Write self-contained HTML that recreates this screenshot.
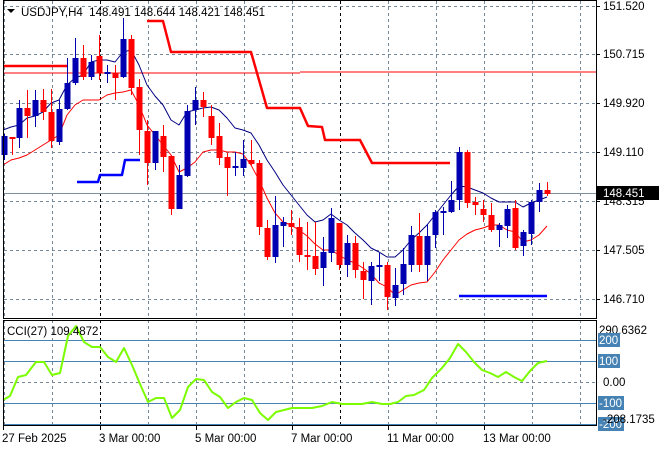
<!DOCTYPE html>
<html><head><meta charset="utf-8"><style>
body{margin:0;background:#fff;width:660px;height:450px;overflow:hidden}
svg{display:block}
text{font-family:"Liberation Sans","DejaVu Sans",sans-serif;font-size:11.5px;fill:#000}
</style></head><body>
<svg id="s" width="660" height="450" xmlns="http://www.w3.org/2000/svg"></svg>
<script>
var s=document.getElementById('s'),h='';
function L(x1,y1,x2,y2,c,w,d){h+='<line x1="'+x1+'" y1="'+y1+'" x2="'+x2+'" y2="'+y2+'" stroke="'+c+'" stroke-width="'+(w||1)+'"'+(d?' stroke-dasharray="'+d+'"':'')+'/>';}
function P(pts,c,w){h+='<polyline fill="none" stroke="'+c+'" stroke-width="'+w+'" stroke-linejoin="round" points="'+pts.map(function(p){return p.join(',')}).join(' ')+'"/>';}
function T(x,y,t,a){h+='<text x="'+x+'" y="'+y+'"'+(a?' '+a:'')+'>'+t+'</text>';}
// grid main
var gy=[6,54,103,152,201,250,299];
gy.forEach(function(y){L(4,y+.5,596,y+.5,'#778899',1,'3,3');});
for(var x=4;x<596;x+=48){var bl=(x==100||x==340);L(x+.5,1,x+.5,318,bl?'#000':'#778899',1,'3,3');L(x+.5,320,x+.5,425,bl?'#000':'#778899',1,'3,3');}
// cci levels
[[340,'#4682b4',0],[361,'#4682b4',0],[403,'#4682b4',0],[424,'#4682b4',0]].forEach(function(a){L(4,a[0]+.5,596,a[0]+.5,a[1],1);});
L(4,382.5,596,382.5,'#778899',1,'3,3');
// current price line
L(4,193.5,596,193.5,'#8090a0',1);
// red thin horizontal
L(4,73,300,73,'#ff0000',1);L(300,72,596,72,'#ff0000',1);
P([[3,66],[67,66]],'#ff0000',2.5);
P([[147,21],[163,21],[171,52],[251,52],[267,108],[300,108],[308,126],[322,127],[325,140],[360,140],[372,163],[450,163]],'#ff0000',2.5);
P([[77,182],[98,182],[100,175],[122,175],[125,160],[140,160]],'#0000ff',2.5);
L(459,296,547,296,'#0000ff',2.5);
// MAs
P([[3,130],[11,127],[19,125],[27,118],[35,116],[43,112],[51,103],[59,100],[67,85],[75,78],[83,75],[91,62],[99,60],[107,60],[115,62],[123,52],[131,50],[139,65],[147,85],[155,96],[163,105],[171,120],[179,125],[187,112],[195,110],[203,108],[211,107],[219,110],[227,118],[235,128],[243,130],[251,133],[259,145],[267,160],[275,172],[283,185],[291,195],[299,205],[307,215],[315,222],[323,220],[331,214],[339,220],[347,225],[355,233],[363,240],[371,248],[379,252],[387,257],[395,257],[403,250],[411,240],[419,233],[427,225],[435,215],[443,205],[451,195],[459,186],[467,187],[475,190],[483,193],[491,198],[499,202],[507,202],[515,202],[523,207],[531,203],[539,200],[547,197]],'#000080',1);
P([[3,165],[11,160],[19,158],[27,155],[35,150],[43,145],[51,140],[59,135],[67,115],[75,105],[83,100],[91,100],[99,100],[107,95],[115,93],[123,92],[131,90],[139,105],[147,125],[155,135],[163,145],[171,155],[179,172],[187,168],[195,162],[203,152],[211,150],[219,150],[227,152],[235,152],[243,154],[251,165],[259,180],[267,198],[275,213],[283,222],[291,225],[299,230],[307,236],[315,244],[323,250],[331,250],[339,255],[347,260],[355,263],[363,268],[371,274],[379,283],[387,287],[395,295],[403,290],[411,285],[419,283],[427,282],[435,272],[443,260],[451,250],[459,240],[467,234],[475,230],[483,228],[491,225],[499,225],[507,230],[515,232],[523,242],[531,240],[539,235],[547,226]],'#ff0000',1);
// candles [x,color,bt,bb,wt,wb]
var C=[[4,'b',136,155,134,160],[12,'r',137,138,137,155],[19,'b',108,138,100,148],[27,'r',108,116,90,138],[35,'b',100,116,90,127],[43,'r',100,112,89,120],[51,'r',112,141,89,148],[59,'b',109,142,100,145],[67,'b',83,109,58,110],[75,'b',58,83,38,85],[83,'r',58,77,45,80],[91,'b',62,77,55,80],[99,'r',56,73,35,80],[107,'b',72,73,65,83],[115,'r',73,78,65,100],[123,'b',39,77,18,78],[131,'r',39,88,35,95],[139,'r',87,130,79,155],[147,'r',131,163,120,185],[155,'b',131,163,131,170],[163,'r',136,157,125,172],[171,'r',156,209,155,215],[179,'b',175,209,165,209],[187,'b',111,176,105,177],[195,'b',100,110,87,125],[203,'r',100,107,92,117],[211,'r',116,138,105,145],[219,'r',136,158,123,165],[227,'r',157,168,153,196],[235,'b',166,168,152,176],[243,'b',159,168,140,176],[251,'r',160,164,140,165],[259,'r',163,227,160,235],[267,'r',228,257,220,260],[275,'b',225,257,196,263],[283,'b',222,226,217,247],[291,'r',223,227,210,235],[299,'r',227,255,218,262],[307,'r',255,256,222,270],[315,'r',256,269,222,275],[323,'b',252,268,237,286],[331,'b',218,253,208,262],[339,'r',223,265,223,270],[347,'b',243,265,235,277],[355,'r',243,270,236,278],[363,'r',271,280,262,299],[371,'b',266,281,262,305],[379,'b',265,267,253,281],[387,'r',265,297,262,310],[395,'b',285,298,268,306],[403,'b',264,284,248,295],[411,'b',235,265,226,272],[419,'r',236,265,213,272],[427,'b',236,265,224,281],[435,'b',212,235,210,248],[443,'b',211,213,207,235],[451,'b',200,212,181,213],[459,'b',152,200,147,210],[467,'r',152,203,150,208],[475,'r',202,205,197,215],[483,'r',209,215,200,222],[491,'r',215,230,203,232],[499,'b',225,230,223,247],[507,'b',209,226,205,238],[515,'r',208,248,200,250],[523,'b',232,246,230,256],[531,'b',202,234,200,245],[539,'b',190,202,183,212],[547,'r',190,194,182,196]];
C.forEach(function(c){var col=c[1]=='b'?'#0000b0':'#ff0000';L(c[0]+.5,c[4],c[0]+.5,c[5],col,1);var hgt=Math.max(2,c[3]-c[2]);h+='<rect x="'+(c[0]-2.5)+'" y="'+c[2]+'" width="6" height="'+hgt+'" fill="'+col+'"/>';});
// cci line
P([[3,400],[10,396],[18,377],[26,375],[36,362],[44,362],[52,375],[60,373],[68,336],[76,326],[84,342],[92,347],[100,347],[108,357],[116,362],[124,348],[132,365],[140,384],[148,402],[156,398],[164,398],[172,418],[180,410],[188,387],[196,379],[204,380],[212,392],[220,397],[228,408],[236,402],[244,398],[252,400],[260,413],[268,420],[276,412],[284,410],[292,408],[302,408],[312,408],[322,406],[332,402],[342,404],[352,404],[362,404],[372,402],[382,404],[390,404],[398,402],[406,396],[414,395],[424,390],[432,378],[442,368],[450,358],[458,344],[466,352],[474,362],[482,370],[490,373],[498,377],[506,372],[514,377],[522,381],[530,371],[538,363],[547,361]],'#7cfc00',2);
// borders
h+='<rect x="3.5" y="0.5" width="593" height="318" fill="none" stroke="#000"/>';
h+='<rect x="3.5" y="320.5" width="593" height="105" fill="none" stroke="#000"/>';
// header
h+='<polygon points="7,9 15,9 11,13" fill="#000"/>';
T(21,16,'USDJPY,H4&#160;&#160;148.491 148.644 148.421 148.451');
T(7,335,'CCI(27) 109.4872');
// price axis
[[151.520,6],[150.715,54],[149.920,103],[149.110,152],[148.315,201],[147.505,250],[146.710,299]].forEach(function(p){L(596,p[1]+.5,600,p[1]+.5,'#000');T(603,p[1]+4,p[0].toFixed(3));});
h+='<rect x="597" y="186" width="62" height="14" fill="#000"/>';
h+='<text x="603" y="197" style="fill:#fff">148.451</text>';
// cci axis
T(599,334,'290.6362');
[[200,340],[100,361],[-100,403],[-200,424]].forEach(function(a){h+='<rect x="598" y="'+(a[1]-7)+'" width="'+(a[0]<0?26:22)+'" height="14" fill="#4682b4"/>';h+='<text x="599" y="'+(a[1]+4)+'" style="fill:#fff">'+a[0]+'</text>';});
T(603,386,'0.00');
T(603,423,'-208.1735');
// time axis
[[3,'27 Feb 2025'],[100,'3 Mar 00:00'],[196,'5 Mar 00:00'],[292,'7 Mar 00:00'],[388,'11 Mar 00:00'],[484,'13 Mar 00:00']].forEach(function(t){L(t[0]+.5,426,t[0]+.5,430,'#000');T(t[0]-1,442,t[1]);});
s.innerHTML=h;
</script>
</body></html>
